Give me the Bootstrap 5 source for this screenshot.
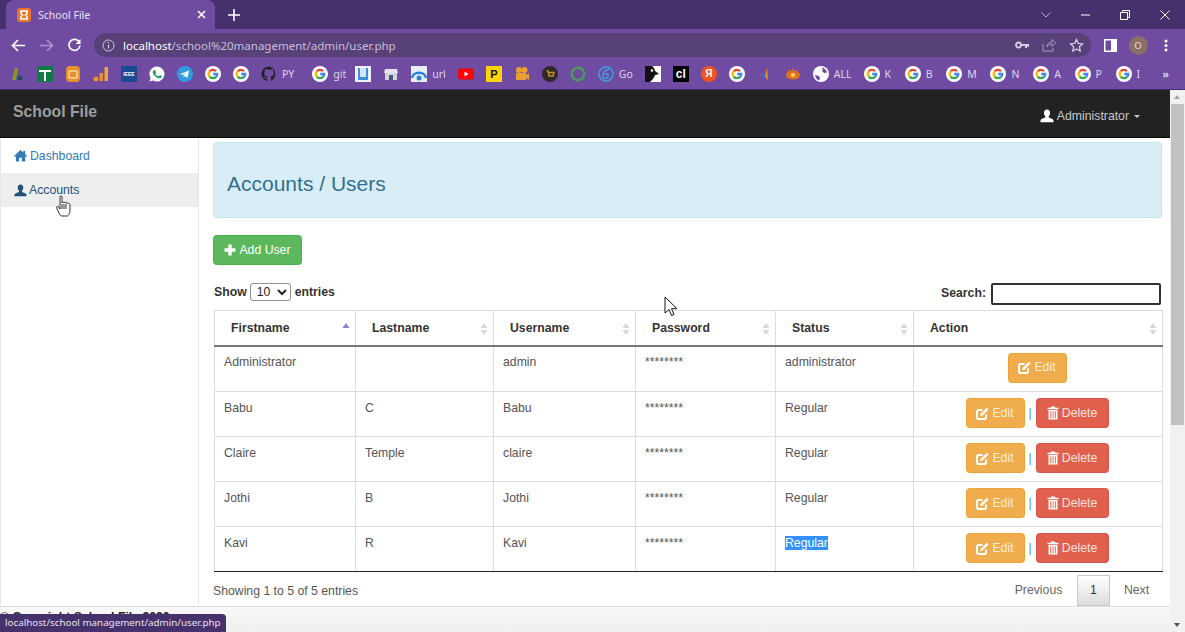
<!DOCTYPE html>
<html lang="en">
<head>
<meta charset="utf-8">
<title>School File</title>
<link href="https://cdn.jsdelivr.net/npm/bootstrap@5.3.0/dist/css/bootstrap.min.css" rel="stylesheet">
<style>
html,body{margin:0;height:632px;overflow:hidden}
body{font-family:"Liberation Sans",Arial,sans-serif;font-size:12.25px;color:#333;position:relative;background:#fff}
.shell{height:632px}
.tabstrip{height:29px;background:#46316c;color:#fff}
.tabbox{width:209px;margin-left:6px;height:29px;background:#6f4ca2;border-radius:8px 8px 0 0;padding:0 0 0 11px;font:10.5px "Noto Sans",sans-serif;color:#e9e2f3}
.fav{width:14px;height:14px;border-radius:3px;background:#e8762d;margin-right:7px}
.tabx{margin-left:auto;margin-right:9px}
.newtab{margin-left:13px}
.winbtns{margin-left:auto;gap:30px;padding-right:15px}
.toolbar{height:32px;background:#6f4ca2;padding-left:10px;padding-right:12px}
.navglyph{width:17px;margin-right:11px}
.omni{width:997px;height:24px;border-radius:12px;background:#584078;padding:0 7px 0 8px;font:11.5px "Noto Sans",sans-serif;color:#c9bedb}
.omni b{font-weight:400;color:#fff}
.omni-ends{margin-left:auto;gap:13px}
.tools-r{margin-left:12.5px;gap:12px}
.avatar{width:19px;height:19px;border-radius:50%;background:#8b6f66;color:#e8dcd2;font:9.5px "Noto Sans",sans-serif}
.bookmarks{height:29px;background:#6f4ca2;border-bottom:1px solid #3f2c60;padding-left:9px;padding-bottom:3px;gap:12px;font:10.5px "Noto Sans",sans-serif;color:#ddd5ea;white-space:nowrap}
.bm{gap:5px}
.bm svg{display:block;flex:none}
.bm-wide{margin-left:6px}
.bm-pull{margin-left:-3px}
.bm-l{padding-right:1.700px}
.sq{width:16px;height:16px;display:flex;align-items:center;justify-content:center;flex:none;font-family:"Liberation Sans",sans-serif;font-weight:700}
.sq-ieee{background:#1a4a8f;color:#fff;font-size:5px}
.sq-p{background:#ffd400;color:#111;font-size:11px}
.sq-cl{background:#000;color:#fff;font-size:12px}
.sq-ya{background:#f4511e;color:#fff;font-size:10px;border-radius:50%}
.sitewrap{height:542px;min-height:0}
.sitecol{width:1170px}
.brandbar.navbar{height:48px;background:#222;padding:0;border-bottom:1px solid #080808;flex-wrap:nowrap}
.brandtxt{color:#9d9d9d;font-size:15.75px;font-weight:700;margin-left:13px;margin-top:-3px}
.adminlink{color:#c9c9c9;margin-right:30px;margin-top:5px;gap:3px}
.caretd{width:0;height:0;border-left:3.5px solid transparent;border-right:3.5px solid transparent;border-top:3.5px solid #c9c9c9;margin-left:2px}
.bodyrow{height:468px;min-height:0}
.sidemenu{width:199px;flex:none;border-left:1px solid #e7e7e7;border-right:1px solid #e7e7e7}
.sideitem{height:34.5px;padding-left:13px;padding-top:1px;color:#337ab7;gap:3px}
.sideitem.on{background:#eee;color:#23527c;gap:2px}
.mainpane{width:971px;padding:4px 8px 0 14px}
.bluehead{height:76px;background:#d9edf7;border:1px solid #bce8f1;border-radius:3.5px;color:#31708f;padding-left:13px;padding-top:7px;font-size:21px;margin-bottom:17px}
.addbtn.btn{background:#5cb85c;border:1px solid #4cae4c;color:#fff;font-size:12.25px;padding:0;width:89px;height:30px;border-radius:3.5px;gap:3px;display:flex;align-items:center;justify-content:center}
.toolsrow{margin-top:17px;height:27px;padding-left:1px;font-weight:700;padding-right:1px;align-items:center;margin-bottom:1px}
.show-side{margin-bottom:7px}
.find-side{margin-bottom:4px}
.lenpick{width:41px;height:18px;margin:0 4px 0 3px;border:1px solid #8f8f8f;border-radius:3px;font:400 12.25px "Liberation Sans",sans-serif;background:#fff;color:#222;padding:0 0 0 2px}
.findbox{width:170px;height:22px;margin-left:5px;border:2px solid #333;border-radius:2px;background:#fff;padding:0}
table.usertbl.table{width:948px;margin:0 0 0 1px;table-layout:fixed;border-collapse:collapse;font-size:12.25px;color:#555;border-bottom:1px solid #111}
.usertbl th{height:35px;font-weight:700;color:#333;padding:0 0 0 16px;vertical-align:middle;border:1px solid #ddd;border-bottom:2px solid #777;position:relative;background:#fff}
.usertbl td{height:45px;padding:7px 9px 0 9px;vertical-align:top;border:1px solid #ddd;background:#fff;color:#555;box-shadow:none}
.usertbl tr.firstrow td{height:46px;padding-top:6px}
.usertbl tr:last-child td{border-bottom:1px solid #222}
.w1{width:141px}.w2{width:138px}.w3{width:142px}.w4{width:140px}.w5{width:138px}.w6{width:249px}
.usertbl td.actcell{padding:6px 2px 0 0;text-align:center;color:#5a8fbd}
.edbtn.btn,.delbtn.btn{display:inline-flex;align-items:center;justify-content:center;height:30px;padding:0;font-size:12.25px;border-radius:3.5px;color:#fff;gap:3px;vertical-align:top}
.edbtn.btn{width:59px;background:#f0ad4e;border:1px solid #eea236;color:#fbeedd}
.delbtn.btn{width:73px;background:#e0604d;border:1px solid #d9534f;color:#fbe3df}
.edbtn svg,.delbtn svg{color:#fff}
.pipe{display:inline-block;width:11px;line-height:30px;text-align:center}
.sortm{position:absolute;right:5px;top:11px}
.picked{background:#3390ff;color:#fff;display:inline-block;line-height:14px;margin-top:1px}
.foot-row{height:34px;color:#555;padding-right:5px}
.count-note{padding-bottom:6px}
.foot-row .pagination{margin:0;align-items:flex-end}
.foot-row .page-link{background:none;border:1px solid transparent;color:#666;font-size:12.25px;padding:0;height:31px;line-height:29px;border-radius:0;text-align:center}
.foot-row .page-item:nth-child(1) .page-link{width:77px}
.foot-row .page-item:nth-child(2) .page-link{width:33px;margin:0 7px 0 0;color:#333;background:linear-gradient(#fff,#dcdcdc);border-color:#cacaca}
.foot-row .page-item:nth-child(3) .page-link{width:41px}
.copyband{height:26px;background:linear-gradient(#f8f8f8,#efefef);border-top:1px solid #ddd;font-weight:700;color:#222;padding-top:4px;line-height:12px;white-space:nowrap}
.scrolltrack{width:15px;background:#f1f1f1;position:relative;height:542px}
.thumb{position:absolute;left:1px;right:1px;top:14px;height:321px;background:#c1c1c1}
.arr-up,.arr-dn{position:absolute;left:4px;width:0;height:0;border-left:3.5px solid transparent;border-right:3.5px solid transparent}
.arr-up{top:5px;border-bottom:4px solid #a3a3a3}
.arr-dn{bottom:5px;border-top:4px solid #505050}
.statuspop{position:absolute;left:0;bottom:0;height:18px;background:#46316c;color:#e6e0ef;border-radius:0 4px 0 0;padding:0 6px 0 5px;font:9.8px "Noto Sans",sans-serif;line-height:18px}
.ptr{position:absolute}
.ptr-arrow{left:664px;top:296px}
.ptr-hand{left:56px;top:195px}
</style>
</head>
<body>
<svg width="0" height="0" class="d-none">
<defs>
<symbol id="gg" viewBox="0 0 16 16"><circle cx="8" cy="8" r="8" fill="#fff"/><g fill="none" stroke-width="2.4"><path stroke="#ea4335" d="M4.8 5.3A4.2 4.2 0 0 1 11 5.1"/><path stroke="#fbbc05" d="M4.8 5.3A4.2 4.2 0 0 0 4.8 10.7"/><path stroke="#34a853" d="M4.8 10.7A4.2 4.2 0 0 0 11 10.9"/><path stroke="#4285f4" d="M11 10.9A4.2 4.2 0 0 0 12.2 8H8.2"/></g></symbol>
<symbol id="user" viewBox="0 0 14 14"><path fill="currentColor" d="M7 0.5c2 0 3 1.5 3 3.4 0 1.4-.5 2.7-1.3 3.4-.3.7 0 1.2.7 1.5 1.8.7 3.6 1.2 4 2.4.2.7.2 1.3.2 2H.4c0-.7 0-1.3.2-2 .4-1.2 2.2-1.7 4-2.4.7-.3 1-.8.7-1.5C4.500 6.600 4 5.300 4 3.900 4 2 5 .5 7 .5z"/></symbol>
<symbol id="home" viewBox="0 0 14 14"><path fill="currentColor" d="M7 1 10 3.700V2h2v3.500L14 7.500 13 8.500 12 7.600V13.500H8.500V9.500h-3v4H2V7.600L1 8.500 0 7.500z"/></symbol>
<symbol id="plus" viewBox="0 0 12 12"><path fill="currentColor" d="M4.300.5h3.400v3.800h3.800v3.400H7.700v3.800H4.300V7.700H.5V4.300h3.800z"/></symbol>
<symbol id="edit" viewBox="0 0 13 13"><path fill="none" stroke="currentColor" stroke-width="2" d="M10 7.500v2.700A1.800 1.800 0 0 1 8.200 12H2.800A1.800 1.800 0 0 1 1 10.200V4.800A1.800 1.800 0 0 1 2.800 3H6.500"/><path fill="currentColor" d="M10.800.8l1.800 1.800-6 6-2.500.7.700-2.500z"/></symbol>
<symbol id="trash" viewBox="0 0 12 14"><path fill="currentColor" d="M4.200.5h3.600l.6 1.300H11.500v1.400H.5V1.800h3.100zM1.500 4h9v9.500h-9zM3.300 5.300v6.900h.9V5.300zm2.300 0v6.900h.9V5.300zm2.300 0v6.900h.9V5.300z"/></symbol>
<symbol id="sorter" viewBox="0 0 8 14"><path fill="#d8d8d8" d="M4 1 7.500 6h-7zM4 13 .5 8h7z"/></symbol>
</defs>
</svg>
<div class="shell d-flex flex-column">
<div class="tabstrip d-flex align-items-center">
  <div class="tabbox d-flex align-items-center">
    <span class="fav d-flex align-items-center justify-content-center"><svg width="10" height="10" viewBox="0 0 10 10"><path fill="none" stroke="#fff" stroke-width="1.600" d="M2 1h6v2.500L6.500 5 8 6.500V9H2V6.500L3.500 5 2 3.500z"/></svg></span>
    <span>School File</span>
    <svg class="tabx" width="9" height="9" viewBox="0 0 9 9"><path stroke="#fff" stroke-width="1.500" d="M1 1l7 7M8 1l-7 7"/></svg>
  </div>
  <svg class="newtab" width="12" height="12" viewBox="0 0 12 12"><path stroke="#fff" stroke-width="1.600" d="M6 0v12M0 6h12"/></svg>
  <div class="winbtns d-flex align-items-center">
    <svg width="10" height="6" viewBox="0 0 10 6"><path fill="none" stroke="#bdb3cf" d="M.5.500 5 5 9.500.500"/></svg>
    <svg width="9" height="2" viewBox="0 0 9 2"><path stroke="#fff" d="M0 1h9"/></svg>
    <svg width="10" height="10" viewBox="0 0 10 10"><path fill="none" stroke="#fff" d="M.500 2.500h7v7h-7zM2.500 2.500v-2h7v7h-2"/></svg>
    <svg width="10" height="10" viewBox="0 0 10 10"><path stroke="#fff" d="M.500.500l9 9M9.500.500l-9 9"/></svg>
  </div>
</div>
<div class="toolbar d-flex align-items-center">
  <svg class="navglyph" width="15" height="13" viewBox="0 0 15 13"><path fill="none" stroke="#fff" stroke-width="1.700" d="M14 6.500H2M7 1 1.500 6.500 7 12"/></svg>
  <svg class="navglyph" width="15" height="13" viewBox="0 0 15 13"><path fill="none" stroke="#a892c8" stroke-width="1.700" d="M1 6.500h12M8 1l5.500 5.500L8 12"/></svg>
  <svg class="navglyph" width="14" height="14" viewBox="0 0 14 14"><path fill="none" stroke="#fff" stroke-width="1.700" d="M12 4.500A5.500 5.500 0 1 0 12.500 7.500"/><path fill="#fff" d="M13 1v5H8z"/></svg>
  <div class="omni d-flex align-items-center">
    <svg width="13" height="13" viewBox="0 0 13 13" class="me-2 flex-none"><circle cx="6.500" cy="6.500" r="5.500" fill="none" stroke="#d5cce2"/><path stroke="#d5cce2" stroke-width="1.200" d="M6.500 5.500v4M6.500 3v1.300"/></svg>
    <span><b>localhost</b>/school%20management/admin/user.php</span>
    <div class="omni-ends d-flex align-items-center">
      <svg width="14" height="8" viewBox="0 0 14 8"><circle cx="3.500" cy="4" r="2.500" fill="none" stroke="#d5cce2" stroke-width="1.800"/><path stroke="#d5cce2" stroke-width="2" d="M6 4h8M11 4v3M13.500 4v2"/></svg>
      <svg width="14" height="14" viewBox="0 0 14 14"><path fill="none" stroke="#a999c2" d="M1 6v7h10v-3M5 9c0-3 2-5 5-5V1.500L13.500 5 10 8.500V6c-2 0-4 1-5 3z"/></svg>
      <svg width="15" height="14" viewBox="0 0 15 14"><path fill="none" stroke="#d5cce2" stroke-width="1.300" d="M7.500 1.500l1.800 3.900 4.200.5-3.100 2.900.8 4.200-3.700-2.100-3.700 2.100.8-4.200L1.500 5.900l4.200-.5z"/></svg>
    </div>
  </div>
  <div class="tools-r d-flex align-items-center">
    <svg width="13" height="13" viewBox="0 0 13 13"><rect width="13" height="13" fill="#fff"/><rect x="1.500" y="1.500" width="5.500" height="10" fill="#6f4ca2"/></svg>
    <span class="avatar d-flex align-items-center justify-content-center">O</span>
    <svg class="ms-1" width="4" height="13" viewBox="0 0 4 13"><circle cx="2" cy="2" r="1.500" fill="#fff"/><circle cx="2" cy="6.500" r="1.500" fill="#fff"/><circle cx="2" cy="11" r="1.500" fill="#fff"/></svg>
  </div>
</div>
<div class="bookmarks d-flex align-items-center">
  <svg width="16" height="16" viewBox="0 0 16 16"><path fill="#8a9a1c" d="M3 14 6 2h3L7 14z"/><circle cx="11" cy="12" r="2.500" fill="#1d4e63"/></svg>
  <svg width="16" height="16" viewBox="0 0 16 16"><rect width="16" height="16" fill="#0f7a45"/><path stroke="#fff" stroke-width="2" d="M2 5h12M8 5v10"/></svg>
  <svg width="16" height="16" viewBox="0 0 16 16"><rect x="1" width="14" height="16" rx="4" fill="#e8912a"/><rect x="4" y="5" width="8" height="7" rx="1" fill="none" stroke="#fbd9a4" stroke-width="1.500"/></svg>
  <svg width="16" height="16" viewBox="0 0 16 16"><circle cx="3" cy="13" r="2.500" fill="#e8912a"/><rect x="6.500" y="7" width="3.500" height="8" fill="#e8912a"/><rect x="11.500" y="1" width="3.500" height="14" fill="#f0a63c"/></svg>
  <span class="sq sq-ieee">IEEE</span>
  <svg width="16" height="16" viewBox="0 0 16 16"><path fill="#fff" d="M8 .5a7.500 7.500 0 0 0-6.400 11.400L.5 15.500l3.700-1A7.500 7.500 0 1 0 8 .5z"/><path fill="#1ba755" d="M5.500 4c1 0 1.500 2 1.500 2.500S6.300 7.500 6.500 8 8 10 9.500 10.300c.6 0 .9-1 1.500-1s1.700.7 1.800 1c.2 1-1 2-2 2C7.500 12.300 3.500 8.500 3.800 6 4 5 4.700 4 5.500 4z"/></svg>
  <svg width="16" height="16" viewBox="0 0 16 16"><circle cx="8" cy="8" r="8" fill="#2f9be0"/><path fill="#fff" d="M3 8l9-3.500-1.500 7.500-2.500-2-1.300 1.300-.3-2.300 3.600-3-4.700 2.700z"/></svg>
  <svg width="16" height="16"><use href="#gg"/></svg>
  <svg width="16" height="16"><use href="#gg"/></svg>
  <span class="bm d-flex align-items-center"><svg width="16" height="16" viewBox="0 0 16 16"><path fill="#20232a" d="M8 .5a7.500 7.500 0 0 0-2.400 14.600c.4.100.5-.2.500-.4v-2c-2 .4-2.500-1-2.500-1-.3-.9-.8-1.100-.8-1.100-.7-.5 0-.5 0-.5.700 0 1.100.8 1.100.8.700 1.100 1.700.8 2.100.6.100-.5.300-.8.500-1-1.600-.2-3.300-.8-3.300-3.600 0-.8.300-1.500.8-2-.1-.2-.3-1 .1-2 0 0 .6-.2 2 .8a7 7 0 0 1 3.800 0c1.400-1 2-.8 2-.8.400 1 .2 1.800.1 2 .5.500.8 1.200.8 2 0 2.800-1.700 3.400-3.300 3.600.3.200.5.700.5 1.400v2.100c0 .2.100.5.500.4A7.500 7.500 0 0 0 8 .5z"/></svg><span>PY</span></span>
  <span class="bm bm-wide d-flex align-items-center"><svg width="16" height="16"><use href="#gg"/></svg><span>git</span></span>
  <svg class="bm-pull" width="16" height="16" viewBox="0 0 16 16"><rect width="16" height="16" fill="#eaf2fb"/><rect x="3" y="2" width="10" height="12" fill="#3b8ee0"/><rect x="5" y="2" width="6" height="9" fill="#d5e6f8"/></svg>
  <svg width="16" height="16" viewBox="0 0 16 16"><path fill="#e8e4ee" d="M2 3h12l1 4H1z"/><rect x="2" y="7" width="12" height="7" fill="#cfd6e2"/><rect x="6" y="9" width="4" height="5" fill="#4b5b7a"/></svg>
  <span class="bm d-flex align-items-center"><svg width="16" height="16" viewBox="0 0 16 16"><rect width="16" height="16" fill="#e8eef8"/><path fill="none" stroke="#2a7fde" stroke-width="2.500" d="M1 12c1-7 13-7 14 0"/><circle cx="8" cy="12" r="2.500" fill="#2a7fde"/></svg><span>url</span></span>
  <svg width="16" height="16" viewBox="0 0 16 16"><rect y="2.500" width="16" height="11" rx="3" fill="#f00"/><path fill="#fff" d="M6.500 5.500v5l4-2.500z"/></svg>
  <span class="sq sq-p">P</span>
  <svg width="16" height="16" viewBox="0 0 16 16"><circle cx="5" cy="4" r="3" fill="#e8a02e"/><circle cx="10.500" cy="4" r="3" fill="#e8a02e"/><rect x="2" y="7" width="10" height="7" fill="#e8a02e"/><path fill="#e8a02e" d="M12 9l3-2v7l-3-2z"/></svg>
  <svg width="16" height="16" viewBox="0 0 16 16"><circle cx="8" cy="8" r="8" fill="#2e2a2a"/><path fill="none" stroke="#c98b2e" stroke-width="1.500" d="M4.500 5h1.500l1 5h4l1-3.500H6.500"/></svg>
  <svg width="16" height="16" viewBox="0 0 16 16"><circle cx="8" cy="8" r="6.300" fill="none" stroke="#4a9a5e" stroke-width="2.400"/></svg>
  <span class="bm d-flex align-items-center"><svg width="16" height="16" viewBox="0 0 16 16"><circle cx="8" cy="8" r="7" fill="none" stroke="#3d9fe0" stroke-width="1.500"/><path fill="none" stroke="#3d9fe0" stroke-width="1.500" d="M11 3C7 4 4.500 7 5 11c.4 2 3.500 2 5-.5 1-2-1-4-3-2"/></svg><span>Go</span></span>
  <svg width="16" height="16" viewBox="0 0 16 16"><rect width="16" height="16" fill="#fff"/><path fill="#111" d="M0 0h7c2 2 3 3 3 5l4 3-4 1c-1 3-3 5-5 7H0z"/><circle cx="7" cy="4.500" r="1.200" fill="#fff"/></svg>
  <span class="sq sq-cl">cl</span>
  <span class="sq sq-ya">Я</span>
  <svg width="16" height="16"><use href="#gg"/></svg>
  <svg width="16" height="16" viewBox="0 0 16 16"><path fill="#ef8c1c" d="M10 1l1 13-3-3z"/><path fill="#3a72c4" d="M3 10l5-3v4z"/></svg>
  <svg width="16" height="16" viewBox="0 0 16 16"><ellipse cx="8" cy="9" rx="7" ry="4.500" fill="#e2731e"/><circle cx="8" cy="9" r="2" fill="#ffd76a"/><path stroke="#e2731e" d="M3 3l1.500 2M8 2v2.500M13 3l-1.500 2"/></svg>
  <span class="bm d-flex align-items-center"><svg width="16" height="16" viewBox="0 0 16 16"><circle cx="8" cy="8" r="8" fill="#fff"/><path fill="#6f4ca2" d="M8 1.500c3 0 5.500 2 6 5l-3 .5-2-2 1-2zM2 9l4 1 1 2.500-1 2C4 14 2.500 12 2 9z"/></svg><span>ALL</span></span>
  <span class="bm d-flex align-items-center"><svg width="16" height="16"><use href="#gg"/></svg><span class="bm-l">K</span></span>
  <span class="bm d-flex align-items-center"><svg width="16" height="16"><use href="#gg"/></svg><span class="bm-l">B</span></span>
  <span class="bm d-flex align-items-center"><svg width="16" height="16"><use href="#gg"/></svg><span class="bm-l">M</span></span>
  <span class="bm d-flex align-items-center"><svg width="16" height="16"><use href="#gg"/></svg><span class="bm-l">N</span></span>
  <span class="bm d-flex align-items-center"><svg width="16" height="16"><use href="#gg"/></svg><span class="bm-l">A</span></span>
  <span class="bm d-flex align-items-center"><svg width="16" height="16"><use href="#gg"/></svg><span class="bm-l">P</span></span>
  <span class="bm d-flex align-items-center"><svg width="16" height="16"><use href="#gg"/></svg><span class="bm-l">I</span></span>
  <span class="ms-auto me-3 fw-bold">»</span>
</div>

<div class="sitewrap d-flex">
  <div class="sitecol d-flex flex-column">
    <nav class="navbar brandbar justify-content-between">
      <span class="brandtxt">School File</span>
      <a class="adminlink d-flex align-items-center text-decoration-none"><svg width="14" height="14" class="text-white"><use href="#user"/></svg><span>Administrator</span><span class="caretd"></span></a>
    </nav>
    <div class="bodyrow d-flex">
      <aside class="sidemenu d-flex flex-column">
        <a class="sideitem d-flex align-items-center text-decoration-none"><svg width="13" height="13"><use href="#home"/></svg><span>Dashboard</span></a>
        <a class="sideitem on d-flex align-items-center text-decoration-none"><svg width="13" height="13"><use href="#user"/></svg><span>Accounts</span></a>
      </aside>
      <main class="mainpane">
        <div class="bluehead d-flex align-items-center">Accounts / Users</div>
        <button class="btn addbtn"><svg width="12" height="12"><use href="#plus"/></svg>Add User</button>
        <div class="toolsrow d-flex justify-content-between">
          <div class="show-side d-flex align-items-center">Show<select class="lenpick"><option>10</option></select>entries</div>
          <div class="find-side d-flex align-items-center">Search:<input class="findbox" type="text"></div>
        </div>
        <table class="table usertbl">
          <thead><tr>
            <th class="w1">Firstname<svg class="sortm" width="8" height="14" viewBox="0 0 8 14"><path fill="#8585d6" d="M4 1 7.500 6h-7z"/></svg></th>
            <th class="w2">Lastname<svg class="sortm" width="8" height="14"><use href="#sorter"/></svg></th>
            <th class="w3">Username<svg class="sortm" width="8" height="14"><use href="#sorter"/></svg></th>
            <th class="w4">Password<svg class="sortm" width="8" height="14"><use href="#sorter"/></svg></th>
            <th class="w5">Status<svg class="sortm" width="8" height="14"><use href="#sorter"/></svg></th>
            <th class="w6">Action<svg class="sortm" width="8" height="14"><use href="#sorter"/></svg></th>
          </tr></thead>
          <tbody>
            <tr class="firstrow"><td>Administrator</td><td></td><td>admin</td><td>********</td><td>administrator</td><td class="actcell"><a class="btn edbtn"><svg width="13" height="13"><use href="#edit"/></svg>Edit</a></td></tr>
            <tr><td>Babu</td><td>C</td><td>Babu</td><td>********</td><td>Regular</td><td class="actcell"><a class="btn edbtn"><svg width="13" height="13"><use href="#edit"/></svg>Edit</a><span class="pipe">|</span><a class="btn delbtn"><svg width="12" height="14"><use href="#trash"/></svg>Delete</a></td></tr>
            <tr><td>Claire</td><td>Temple</td><td>claire</td><td>********</td><td>Regular</td><td class="actcell"><a class="btn edbtn"><svg width="13" height="13"><use href="#edit"/></svg>Edit</a><span class="pipe">|</span><a class="btn delbtn"><svg width="12" height="14"><use href="#trash"/></svg>Delete</a></td></tr>
            <tr><td>Jothi</td><td>B</td><td>Jothi</td><td>********</td><td>Regular</td><td class="actcell"><a class="btn edbtn"><svg width="13" height="13"><use href="#edit"/></svg>Edit</a><span class="pipe">|</span><a class="btn delbtn"><svg width="12" height="14"><use href="#trash"/></svg>Delete</a></td></tr>
            <tr><td>Kavi</td><td>R</td><td>Kavi</td><td>********</td><td><span class="picked">Regular</span></td><td class="actcell"><a class="btn edbtn"><svg width="13" height="13"><use href="#edit"/></svg>Edit</a><span class="pipe">|</span><a class="btn delbtn"><svg width="12" height="14"><use href="#trash"/></svg>Delete</a></td></tr>
          </tbody>
        </table>
        <div class="foot-row d-flex justify-content-between align-items-end">
          <span class="count-note">Showing 1 to 5 of 5 entries</span>
          <ul class="pagination">
            <li class="page-item"><a class="page-link">Previous</a></li>
            <li class="page-item"><a class="page-link">1</a></li>
            <li class="page-item"><a class="page-link">Next</a></li>
          </ul>
        </div>
      </main>
    </div>
    <footer class="copyband">© Copyright School File 2020</footer>
  </div>
  <div class="scrolltrack">
    <span class="arr-up"></span><span class="thumb"></span><span class="arr-dn"></span>
  </div>
</div>
</div>
<div class="statuspop">localhost/school management/admin/user.php</div>
<svg class="ptr ptr-arrow" width="14" height="21" viewBox="0 0 14 21"><path fill="#fff" stroke="#111" d="M1 1v16l4-3.500 2.500 6 2.500-1-2.500-5.800H13z"/></svg>
<svg class="ptr ptr-hand" width="15" height="22" viewBox="0 0 15 22"><path fill="#fff" stroke="#333" d="M4 2c0-1.500 2-1.500 2 0v6c0-1 2-1 2 0 0-1 2-1 2 .2 0-.8 2-.8 2 .4.500-.5 2-.3 2 1V15c0 3-1.500 6-3 6H6c-1.500 0-2-1-3-3L.7 13c-.7-1.500 1-2.300 2-1L4 14z"/><path stroke="#333" d="M6 9v5M8 9v5M10 9v5"/></svg>
<script src="https://cdn.jsdelivr.net/npm/bootstrap@5.3.0/dist/js/bootstrap.bundle.min.js"></script>
</body>
</html>
